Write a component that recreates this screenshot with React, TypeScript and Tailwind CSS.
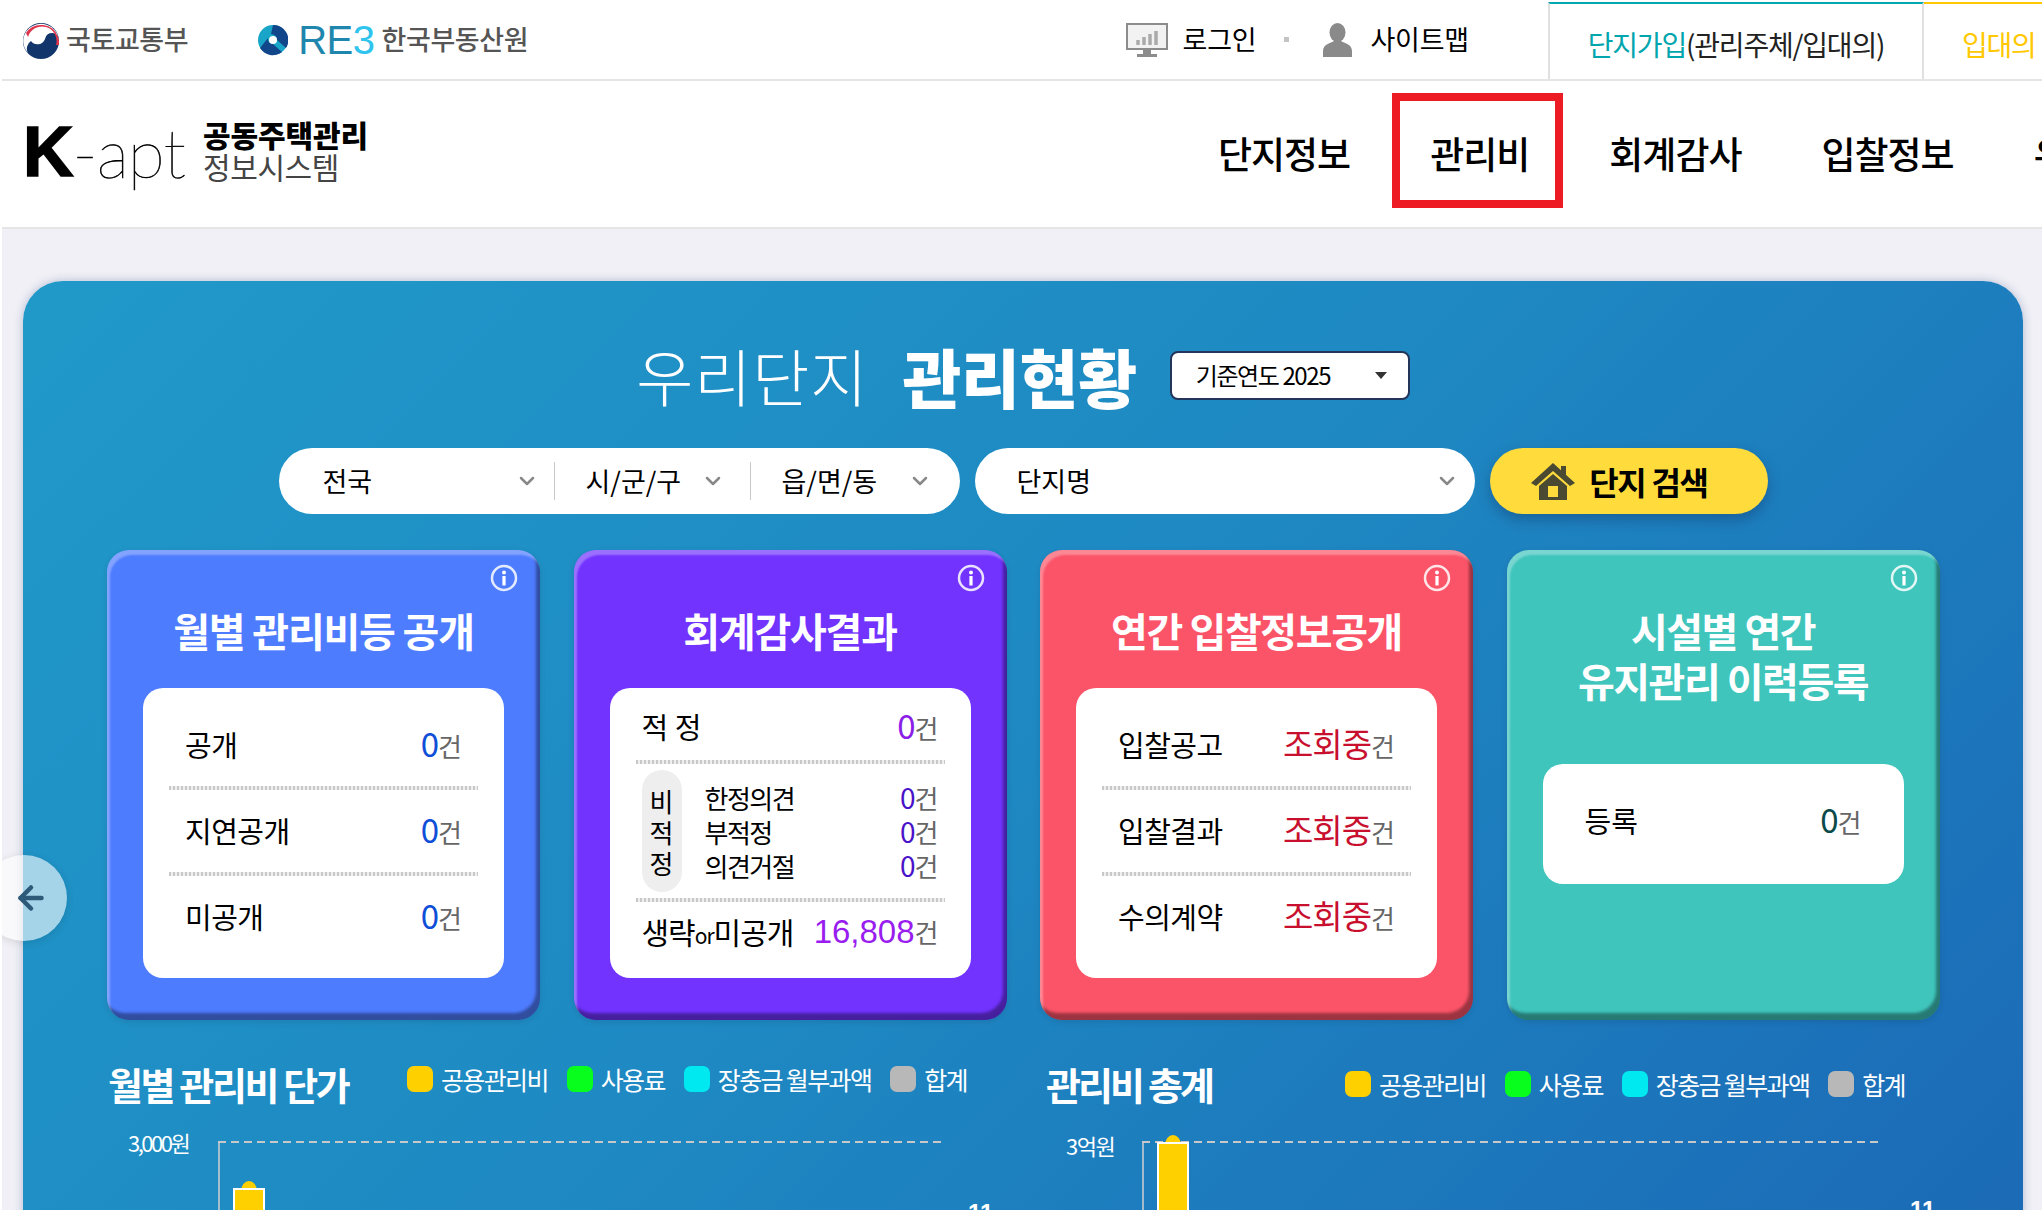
import React from 'react';
import { ChevronDown, ArrowLeft } from 'lucide-react';

const dots = 'h-[4px] bg-[repeating-linear-gradient(90deg,#c8c8c8_0_2px,#efefef_2px_4px)]';

const InfoIcon = () => (
  <svg viewBox="0 0 28 28" className="absolute top-[14px] right-[22px] w-[28px] h-[28px]">
    <circle cx="14" cy="14" r="12" fill="none" stroke="#fff" strokeOpacity="0.85" strokeWidth="2.5" />
    <circle cx="14" cy="8.5" r="2" fill="#fff" />
    <rect x="12.4" y="12" width="3.2" height="9.5" fill="#fff" />
  </svg>
);

const Count = ({ value, color, small }: { value: string; color: string; small?: boolean }) => (
  <span className={`whitespace-nowrap leading-none ${small ? 'text-[28px] tracking-[-1px]' : 'text-[33px] tracking-[-1px] pb-[3px]'}`}>
    <span className={color}>{value}</span>
    <span className="text-[26px] text-[#666] tracking-[-2px]">건</span>
  </span>
);

const Row = ({ label, value, color }: { label: string; value: string; color: string }) => (
  <div className="h-[86px] flex items-center justify-between pl-[42px] pr-[44px]">
    <span className="text-[29px] text-black tracking-[-0.5px]">{label}</span>
    <Count value={value} color={color} />
  </div>
);

const Card = ({ bg, title, titleClass, top, children }: {
  bg: string; title: React.ReactNode; titleClass: string; top: string; children: React.ReactNode;
}) => (
  <div className={`relative w-[433px] h-[470px] rounded-[22px] px-[36px] shadow-[inset_3px_5px_2px_rgba(255,255,255,0.3),inset_-4px_-7px_3px_rgba(0,0,0,0.38),0_2px_6px_rgba(0,0,0,0.1)] ${bg}`}>
    <InfoIcon />
    <div className={`absolute left-0 right-0 top-[55px] text-center text-white font-bold text-[40px] leading-[50px] ${titleClass}`}>{title}</div>
    <div className={`absolute left-[36px] w-[361px] bg-white rounded-[20px] ${top}`}>{children}</div>
  </div>
);

const Divider = ({ className = '' }: { className?: string }) => (
  <div className={`mx-[26px] ${dots} ${className}`} />
);

const MgmtCard = () => (
  <Card bg="bg-[#4e7cff]" title="월별 관리비등 공개" titleClass="tracking-[-1.2px]" top="top-[138px] h-[290px]">
    <div className="pt-[14px]">
      <Row label="공개" value="0" color="text-[#0f4fd8]" />
      <Divider className="-my-[2px]" />
      <Row label="지연공개" value="0" color="text-[#0f4fd8]" />
      <Divider className="-my-[2px]" />
      <Row label="미공개" value="0" color="text-[#0f4fd8]" />
    </div>
  </Card>
);

const AuditCard = () => (
  <Card bg="bg-[#7233ff]" title="회계감사결과" titleClass="tracking-[-1.2px]" top="top-[138px] h-[290px]">
    <div className="h-[72px] flex items-center justify-between pl-[32px] pr-[34px] pt-[6px]">
      <span className="text-[29px] text-black whitespace-pre">적 정</span>
      <Count value="0" color="text-[#8b1fe8]" />
    </div>
    <Divider />
    <div className="h-[134px] flex items-center pl-[32px] pr-[34px]">
      <div className="w-[40px] h-[122px] rounded-full bg-[#eeeeee] flex flex-col items-center justify-center text-[26px] leading-[31px] text-black">
        <span>비</span>
        <span>적</span>
        <span>정</span>
      </div>
      <div className="flex-1 pl-[23px]">
        {['한정의견', '부적정', '의견거절'].map(t => (
          <div key={t} className="h-[34px] flex items-center justify-between text-[26px] text-black tracking-[-1.5px]">
            <span>{t}</span>
            <Count value="0" color="text-[#4a12c8]" small />
          </div>
        ))}
      </div>
    </div>
    <Divider />
    <div className="h-[64px] flex items-center justify-between pl-[32px] pr-[34px] pb-[6px]">
      <span className="text-[30px] text-black tracking-[-1px] whitespace-nowrap">생략<span className="text-[21px]">or</span>미공개</span>
      <span className="whitespace-nowrap leading-none">
        <span className="text-[33px] text-[#9a1df0] font-['Liberation_Sans',sans-serif]">16,808</span>
        <span className="text-[26px] text-[#666] tracking-[-2px]">건</span>
      </span>
    </div>
  </Card>
);

const BidCard = () => (
  <Card bg="bg-[#fb5468]" title="연간 입찰정보공개" titleClass="tracking-[-1.4px]" top="top-[138px] h-[290px]">
    <div className="pt-[14px]">
      {['입찰공고', '입찰결과', '수의계약'].map((t, i) => (
        <React.Fragment key={t}>
          {i > 0 && <Divider className="-my-[2px]" />}
          <div className="h-[86px] flex items-center justify-between pl-[42px] pr-[44px]">
            <span className="text-[29px] text-black tracking-[-0.5px]">{t}</span>
            <Count value="조회중" color="text-[#c8102e]" />
          </div>
        </React.Fragment>
      ))}
    </div>
  </Card>
);

const FacilityCard = () => (
  <Card bg="bg-[#3fc5bc]" title={<>시설별 연간<br />유지관리 이력등록</>} titleClass="tracking-[-1.5px]" top="top-[214px] h-[120px]">
    <div className="h-[120px] flex items-center justify-between pl-[42px] pr-[44px] pb-[6px]">
      <span className="text-[29px] text-black">등록</span>
      <Count value="0" color="text-[#0b4a4a]" />
    </div>
  </Card>
);

const Legend = ({ className = '' }: { className?: string }) => {
  const items = [
    { c: 'bg-[#ffd000]', t: '공용관리비' },
    { c: 'bg-[#08ff1e]', t: '사용료' },
    { c: 'bg-[#00e8f0]', t: '장충금 월부과액' },
    { c: 'bg-[#b8b8b8]', t: '합계' },
  ];
  return (
    <div className={`flex items-center gap-[19px] ${className}`}>
      {items.map(it => (
        <div key={it.t} className="flex items-center gap-[8px]">
          <span className={`w-[26px] h-[26px] rounded-[7px] ${it.c}`} />
          <span className="text-[25px] leading-[30px] text-white tracking-[-1.65px] whitespace-nowrap">{it.t}</span>
        </div>
      ))}
    </div>
  );
};

const Chart = ({ dash, barX, barTop, end, tickX, tickY }: { dash: number; barX: number; barTop: number; end: number; tickX: number; tickY: number }) => (
  <svg width="800" height="100" className="block shrink-0">
    <line x1="1" y1={dash} x2="1" y2="100" stroke="#d0d0d0" strokeWidth="1.5" />
    <line x1="0" y1={dash} x2={end} y2={dash} stroke="#c8c8c8" strokeWidth="2" strokeDasharray="8 5" />
    <ellipse cx={barX + 15} cy={barTop + 2} rx="8" ry="10" fill="#ffd000" />
    <rect x={barX} y={barTop} width="30" height="100" fill="#ffd000" stroke="#fff" strokeWidth="2" />
    <text x={tickX} y={tickY} fill="#fff" fontSize="24" fontWeight="700" fontFamily="Liberation Sans">11</text>
  </svg>
);

const SearchSelect = ({ label, className = '' }: { label: string; className?: string }) => (
  <div className={`flex items-center justify-between ${className}`}>
    <span className="text-[27px] text-black whitespace-nowrap">{label}</span>
    <ChevronDown className="w-[24px] h-[24px] text-[#888]" strokeWidth={2.5} />
  </div>
);

export default function App() {
  return (
    <div className="relative w-[2042px] h-[1210px] overflow-hidden bg-[#f0f0f6] border-l-2 border-white font-['Noto_Sans_CJK_KR','Noto_Sans',sans-serif]">
      <header className="h-[81px] flex border-b-2 border-[#e5e5e5] bg-white pl-[21px]">
        <div className="flex items-center">
          <svg viewBox="0 0 36 36" className="w-[36px] h-[36px] mt-[2px]">
            <circle cx="18" cy="18" r="18" fill="#12366b" />
            <path d="M1 13 A18 18 0 0 1 36 18 A7 7 0 0 0 22 16 A8 8 0 0 1 8 18 A9 9 0 0 0 5 30 A18 18 0 0 1 1 13 Z" fill="#fff" />
            <path d="M3 10 A18 18 0 0 1 35 14 A18 18 0 0 1 36 22 L33 22 A14 14 0 0 0 5 14 Z" fill="#e0334c" />
          </svg>
          <span className="ml-[7px] text-[27px] text-[#555] font-medium tracking-[-0.4px]">국토교통부</span>
          <svg viewBox="0 0 30 36" className="ml-[70px] w-[30px] h-[36px]">
            <circle cx="15" cy="18" r="15" fill="#18a5c8" />
            <path d="M15 3 A15 15 0 0 1 28 26 L19 18 A6 6 0 0 0 13 12 Z" fill="#12468a" />
            <path d="M2 26 A15 15 0 0 0 24 30 L15 22 A5 5 0 0 1 10 16 Z" fill="#12468a" />
            <circle cx="15" cy="18" r="4" fill="#fff" />
          </svg>
          <span className="ml-[10px] text-[40px] leading-none font-['Liberation_Sans',sans-serif] tracking-[-0.5px] text-[#1f86ad]">RE<span className="text-[#2fc4ee]">3</span></span>
          <span className="ml-[7px] text-[27px] text-[#555] font-medium tracking-[-0.4px]">한국부동산원</span>
        </div>
        <div className="flex items-center ml-auto">
          <svg viewBox="0 0 42 34" className="w-[42px] h-[34px]">
            <rect x="1" y="1" width="40" height="25" fill="#f2f2f2" stroke="#8c8c8c" strokeWidth="2" />
            <path d="M12 22v-5M18 22v-8M24 22v-11M30 22v-14" stroke="#aaa" strokeWidth="3.5" />
            <rect x="17" y="26" width="8" height="5" fill="#8c8c8c" />
            <rect x="11" y="31" width="20" height="3" fill="#8c8c8c" />
          </svg>
          <span className="ml-[15px] text-[27px] text-black tracking-[-0.2px]">로그인</span>
          <span className="ml-[28px] w-[5px] h-[5px] bg-[#c4c4c4]" />
          <svg viewBox="0 0 31 34" className="ml-[33px] w-[31px] h-[34px]">
            <ellipse cx="15.5" cy="9.5" rx="8" ry="9.5" fill="#8a8a8a" />
            <path d="M1 34 V28 C1 21 9 20 12 18 H19 C22 20 30 21 30 28 V34 Z" fill="#8a8a8a" />
          </svg>
          <span className="ml-[17px] text-[27px] text-black tracking-[-0.2px]">사이트맵</span>
        </div>
        <div className="ml-[79px] pt-[2px] flex shrink-0">
          <div className="w-[376px] border-t-[2px] border-t-[#00a8b0] border-l-2 border-l-[#e0e0e0] border-r-2 border-r-[#e0e0e0] flex items-center justify-center pt-[4px]">
            <span className="text-[28px] text-[#00a5ad] tracking-[-1.2px] whitespace-nowrap">단지가입<span className="text-[#222]">(관리주체/입대의)</span></span>
          </div>
          <div className="w-[118px] overflow-hidden border-t-[2px] border-t-[#ffc800] flex items-center pl-[38px] pt-[4px]">
            <span className="text-[28px] text-[#ffc800] tracking-[-1.2px] whitespace-nowrap">입대의</span>
          </div>
        </div>
      </header>

      <nav className="h-[148px] flex items-center bg-white border-b-2 border-[#e5e5e5] pl-[21px]">
        <div className="w-[180px] shrink-0 flex items-start h-[100px] pt-[12px] whitespace-nowrap">
          <span className="text-[70px] leading-[72px] font-bold text-black font-['Liberation_Sans',sans-serif] tracking-[-1px] [-webkit-text-stroke:1.5px_black]">K</span>
          <span className="text-[68px] leading-[72px] font-thin text-black font-['Lato',sans-serif] tracking-[-1px] [-webkit-text-stroke:0.6px_black]">-apt</span>
        </div>
        <div className="w-[166px] shrink-0 flex flex-col -mt-[8px] whitespace-nowrap">
          <span className="text-[30px] leading-[32px] font-black text-black tracking-[-0.1px]">공동주택관리</span>
          <span className="text-[30px] leading-[32px] text-[#444] tracking-[-0.4px]">정보시스템</span>
        </div>
        <div className="ml-[849px] flex items-center gap-[80px] text-[37px] font-medium text-black tracking-[-1px] whitespace-nowrap">
          <span>단지정보</span>
          <span className="relative">
            관리비
            <span className="absolute -left-[38px] -top-[33px] w-[171px] h-[115px] border-8 border-[#ed1c24]" />
          </span>
          <span>회계감사</span>
          <span>입찰정보</span>
          <span>유지관리</span>
        </div>
      </nav>

      <main className="mt-[52px] ml-[21px] w-[2000px] h-[1000px] rounded-t-[40px] bg-[linear-gradient(135deg,#2099c9_0%,#1e88c2_50%,#1b69b6_100%)] shadow-[0_0_10px_rgba(40,60,120,0.3)] pt-[61px]">
        <div className="h-[66px] flex items-center justify-center">
          <span className="text-[62px] leading-none font-light text-white tracking-[1px]">우리단지</span>
          <span className="ml-[34px] text-[64px] leading-none font-black text-white tracking-[-0.3px]">관리현황</span>
          <div className="ml-[33px] w-[240px] h-[49px] bg-white rounded-[8px] border-2 border-[#23355b] flex items-center justify-between pl-[24px] pr-[21px]">
            <span className="text-[24px] text-black tracking-[-1.4px] whitespace-nowrap">기준연도 2025</span>
            <span className="w-0 h-0 border-x-[6px] border-x-transparent border-t-[7px] border-t-[#333]" />
          </div>
        </div>

        <div className="mt-[40px] flex justify-center gap-[15px]">
          <div className="w-[681px] h-[66px] bg-white rounded-full flex items-center pl-[44px] pr-[28px]">
            <SearchSelect label="전국" className="w-[216px]" />
            <span className="ml-[15px] w-px h-[38px] bg-[#c8c8c8]" />
            <SearchSelect label="시/군/구" className="w-[180px] pl-[31px] pr-[10px]" />
            <span className="ml-[15px] w-px h-[38px] bg-[#c8c8c8]" />
            <SearchSelect label="읍/면/동" className="flex-1 pl-[31px]" />
          </div>
          <div className="w-[500px] h-[66px] bg-white rounded-full flex items-center pl-[42px] pr-[16px]">
            <SearchSelect label="단지명" className="w-full" />
          </div>
          <div className="w-[278px] h-[66px] bg-[#ffdc3c] rounded-full flex items-center justify-center gap-[14px] pr-[18px] shadow-[0_6px_14px_rgba(20,50,100,0.4)]">
            <svg viewBox="0 0 44 38" className="w-[44px] h-[38px]">
              <path d="M22 1 L44 21 L39 24 L22 9 L5 24 L0 21 Z" fill="#4a4a32" />
              <path d="M8 24 L22 12 L36 24 V38 H8 Z" fill="#4a4a32" />
              <rect x="17" y="24" width="10" height="11" fill="#ffdc3c" />
              <rect x="30" y="4" width="5" height="10" fill="#4a4a32" />
            </svg>
            <span className="text-[32px] font-bold text-black tracking-[-1.3px] whitespace-nowrap">단지 검색</span>
          </div>
        </div>

        <div className="mt-[36px] pl-[84px] flex gap-[33.5px]">
          <MgmtCard />
          <AuditCard />
          <BidCard />
          <FacilityCard />
        </div>

        <div className="mt-[38px] pl-[85px] flex">
          <div className="w-[938px]">
            <div className="h-[52px] flex items-center">
              <span className="w-[299px] text-[38px] leading-none font-bold text-white tracking-[-2.4px] whitespace-nowrap">월별 관리비 단가</span>
              <Legend className="-mt-[10px]" />
            </div>
            <div className="mt-[14px] flex">
              <span className="w-[110px] pl-[20px] pt-[4px] text-[22px] leading-[28px] text-white tracking-[-2.5px] whitespace-nowrap">3,000원</span>
              <Chart dash={18} barX={16} barTop={65} end={724} tickX={750} tickY={97} />
            </div>
          </div>
          <div className="flex-1">
            <div className="h-[52px] flex items-center">
              <span className="w-[299px] text-[38px] leading-none font-bold text-white tracking-[-2.9px] whitespace-nowrap">관리비 총계</span>
              <Legend />
            </div>
            <div className="mt-[14px] flex">
              <span className="w-[96px] pl-[20px] pt-[7px] text-[22px] leading-[28px] text-white tracking-[-1.5px] whitespace-nowrap">3억원</span>
              <Chart dash={18} barX={16} barTop={19} end={740} tickX={768} tickY={94} />
            </div>
          </div>
        </div>
      </main>

      <button className="absolute -left-[21px] top-[855px] w-[86px] h-[86px] rounded-full bg-white/60 shadow-[0_2px_8px_rgba(0,0,0,0.12)] flex items-center justify-end pr-[18px]">
        <ArrowLeft className="w-[36px] h-[36px] text-[#2c5a78]" strokeWidth={3} />
      </button>
    </div>
  );
}
